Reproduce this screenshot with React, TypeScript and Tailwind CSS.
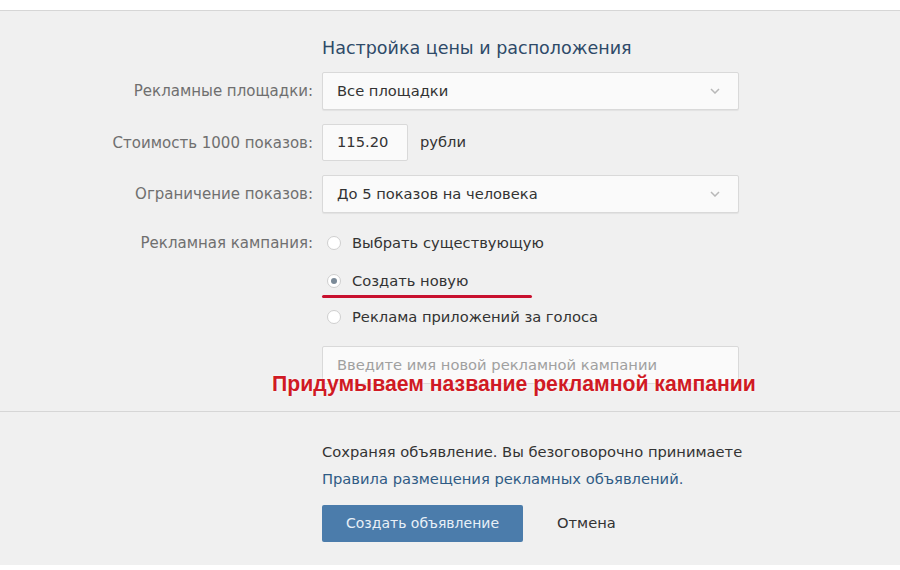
import type { ReactNode } from "react";

function Label({ children }: { children: ReactNode }) {
  return <div className="text-right text-[15px] leading-[20px] text-[#6f6f6f] whitespace-nowrap">{children}</div>;
}

function Chevron() {
  return (
    <svg width="10" height="6" viewBox="0 0 10 6" className="text-[#b8b8b8]">
      <polyline points="1,1 5,5 9,1" fill="none" stroke="currentColor" strokeWidth="1.5" />
    </svg>
  );
}

function Select({ value }: { value: string }) {
  return (
    <div className="flex h-[38px] items-center justify-between rounded-[2px] border border-[#d9d9d9] bg-[#fafafa] pl-[14px] pr-[18px] text-[14.7px] text-[#333] shadow-[0_1px_1px_rgba(0,0,0,0.06)]">
      <span>{value}</span>
      <Chevron />
    </div>
  );
}

function Radio({ checked, children }: { checked?: boolean; children: ReactNode }) {
  return (
    <div className="flex h-[24px] items-center gap-[11px] pl-[5px] text-[14.7px] text-[#333]">
      <span className="flex h-[14px] w-[14px] items-center justify-center rounded-full border border-[#cfcfcf] bg-white">
        {checked && <span className="h-[6px] w-[6px] rounded-full bg-[#7b8a98]" />}
      </span>
      <span>{children}</span>
    </div>
  );
}

export default function App() {
  return (
    <div className="flex min-h-[570px] w-[900px] flex-col bg-[#f0f0f0] font-['DejaVu_Sans',sans-serif]">
      <div className="h-[11px] border-b border-[#d6d6d6] bg-white" />

      <section className="relative border-b border-[#d6d6d6] pt-[27px] pb-[27px]">
        <h2 className="ml-[322px] text-[17.5px] leading-[20px] text-[#2e4a68]">Настройка цены и расположения</h2>

        <div className="mt-[14px] grid grid-cols-[313px_417px] items-center gap-x-[9px]">
          <Label>Рекламные площадки:</Label>
          <Select value="Все площадки" />

          <div className="col-span-2 h-[14px]" />
          <Label>Стоимость 1000 показов:</Label>
          <div className="flex items-center gap-[12px]">
            <div className="flex h-[37px] w-[86px] items-center rounded-[2px] border border-[#d9d9d9] bg-[#fafafa] pl-[14px] text-[14.7px] text-[#333]">
              115.20
            </div>
            <span className="text-[14.7px] text-[#333]">рубли</span>
          </div>

          <div className="col-span-2 h-[14px]" />
          <Label>Ограничение показов:</Label>
          <Select value="До 5 показов на человека" />

          <div className="col-span-2 h-[18px]" />
          <div className="self-start pt-[2px]">
            <Label>Рекламная кампания:</Label>
          </div>
          <div className="flex flex-col">
            <Radio>Выбрать существующую</Radio>
            <div className="relative mt-[14px]">
              <Radio checked>Создать новую</Radio>
              <div className="absolute left-0 top-[26px] h-[3px] w-[210px] rounded-full bg-[#c8102e]" />
            </div>
            <div className="mt-[12px]">
              <Radio>Реклама приложений за голоса</Radio>
            </div>
            <div className="mt-[17px] flex h-[38px] items-center rounded-[2px] border border-[#d9d9d9] bg-[#fafafa] pl-[14px] text-[14.7px] text-[#a0a0a0]">
              Введите имя новой рекламной кампании
            </div>
          </div>
        </div>

        <div className="absolute left-[272px] top-[361px] font-['Liberation_Sans',sans-serif] text-[21.2px] font-bold leading-[24px] text-[#d01a24] [text-shadow:0_0_3px_#fff]">
          Придумываем название рекламной кампании
        </div>
      </section>

      <section className="flex-1 pl-[322px] pt-[26px]">
        <p className="text-[14.7px] leading-[27px] text-[#333]">Сохраняя объявление. Вы безоговорочно принимаете</p>
        <p className="text-[14.7px] leading-[27px] text-[#2f5b85]">Правила размещения рекламных объявлений.</p>
        <div className="mt-[13px] flex items-center gap-[34px]">
          <button className="h-[37px] w-[201px] rounded-[2px] bg-[#4b7cab] text-[14px] text-[#e8f0f7]">Создать объявление</button>
          <span className="text-[14.7px] text-[#333]">Отмена</span>
        </div>
      </section>

      <div className="h-[5px] bg-white" />
    </div>
  );
}
